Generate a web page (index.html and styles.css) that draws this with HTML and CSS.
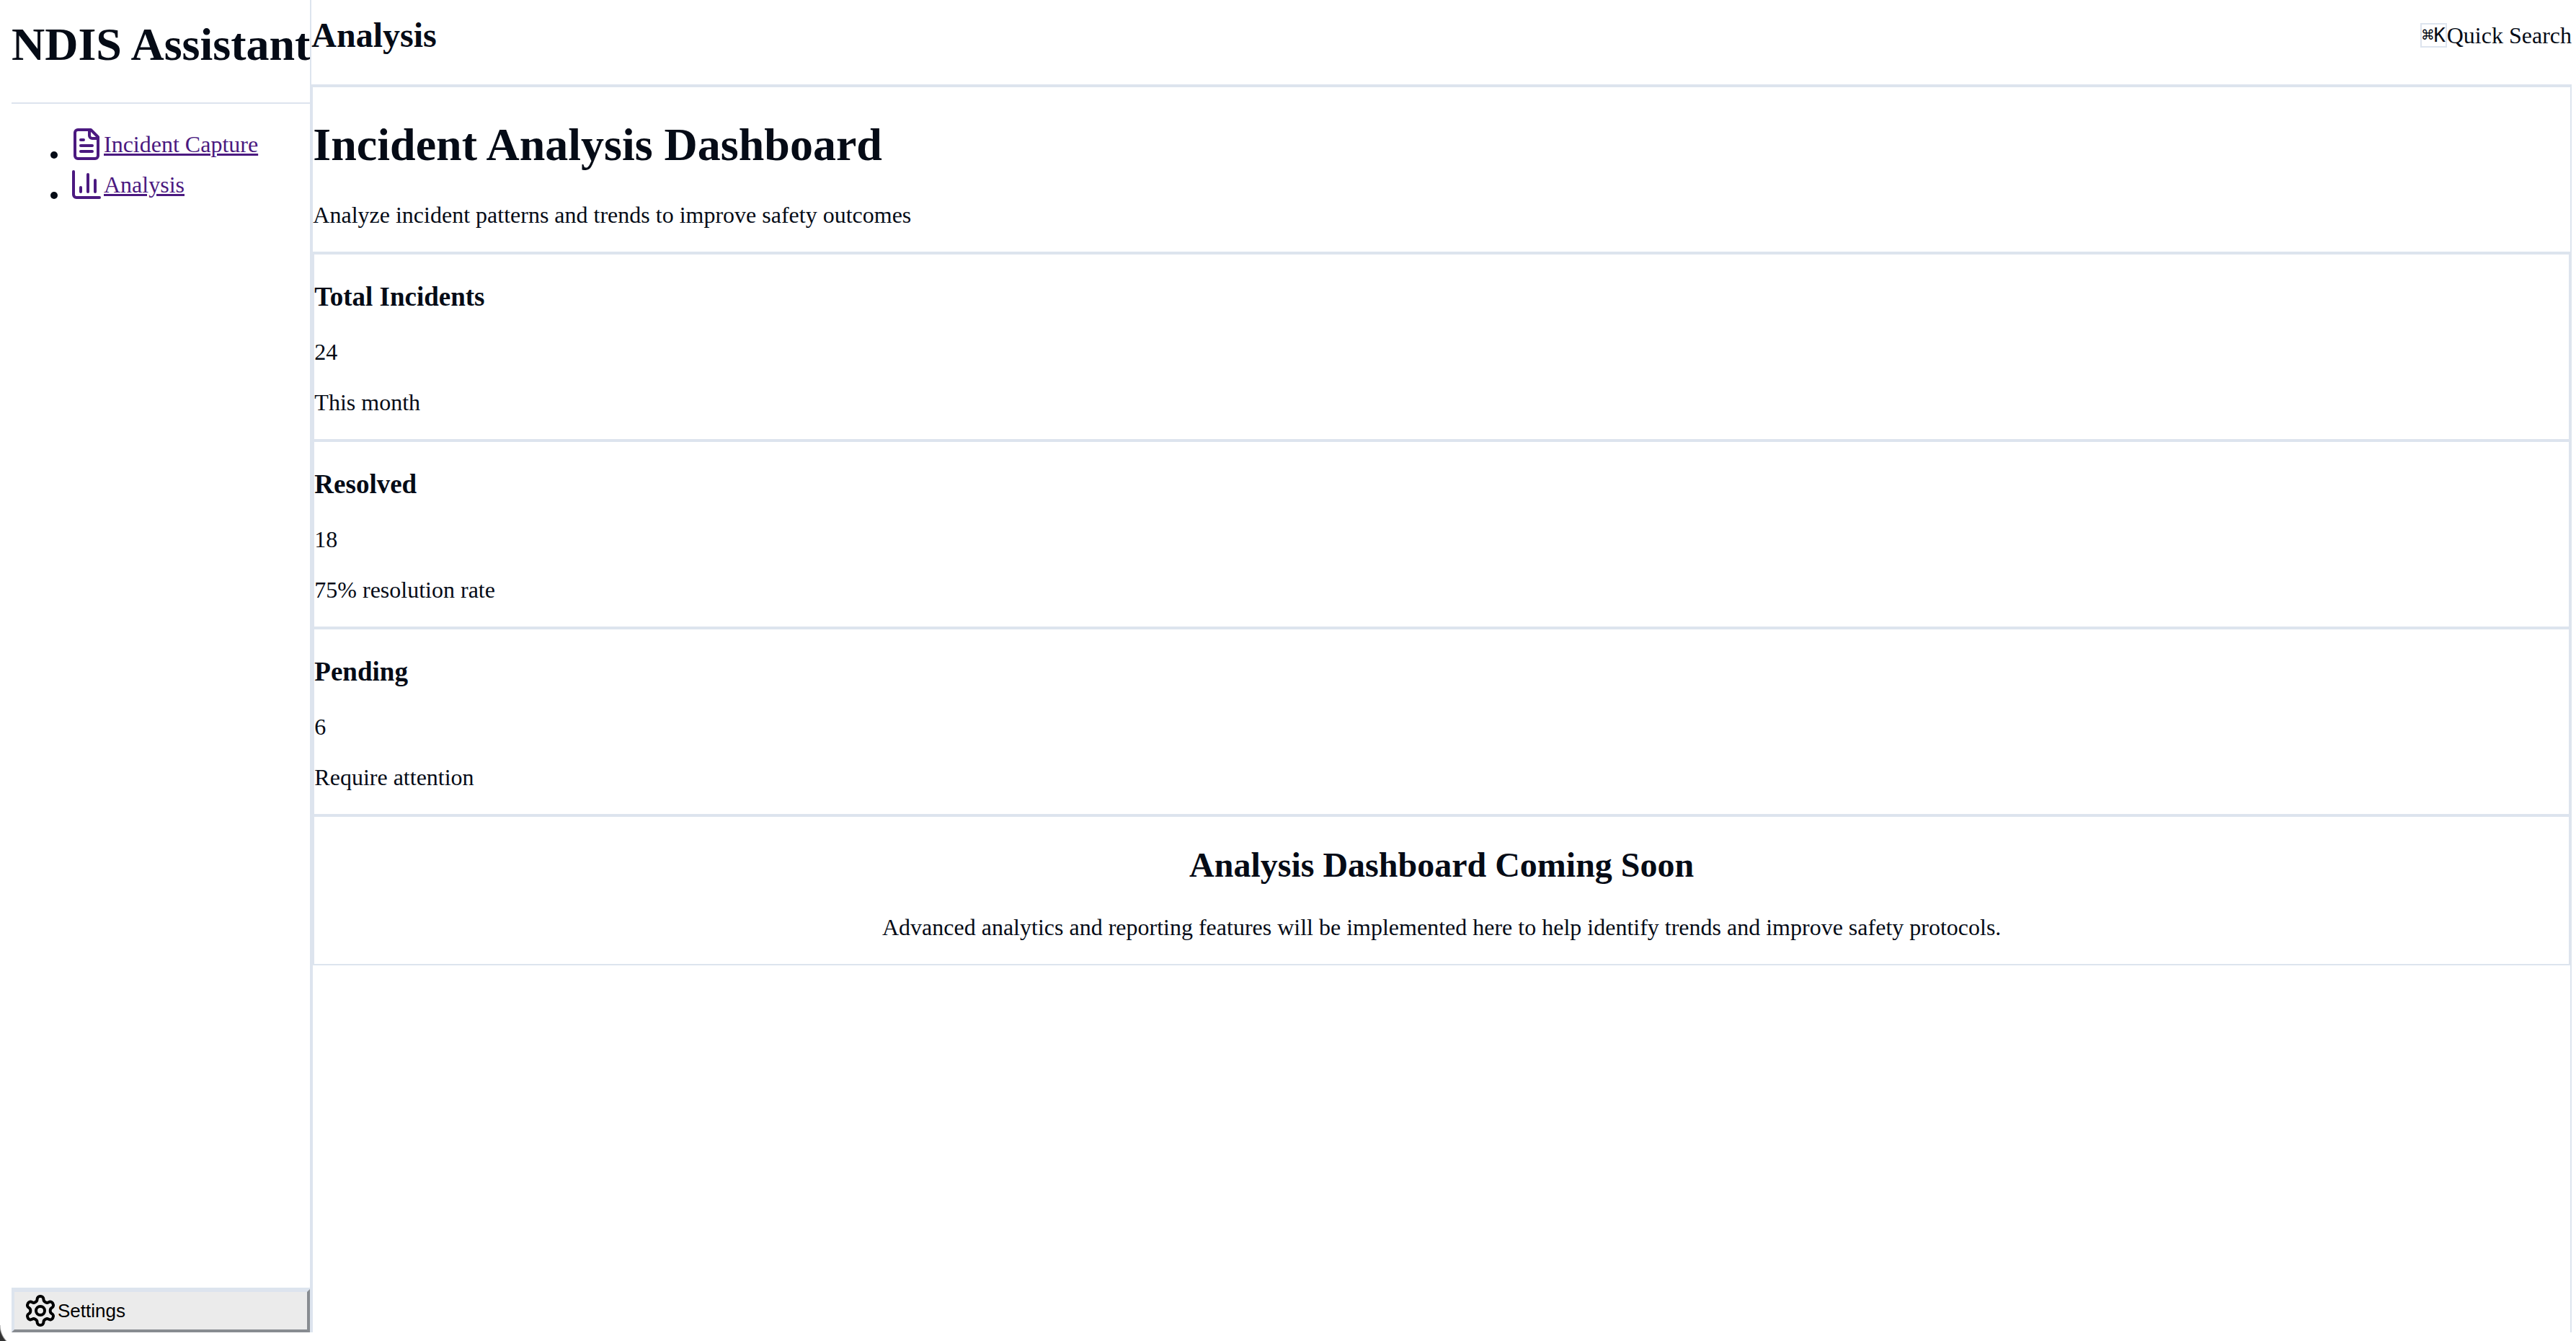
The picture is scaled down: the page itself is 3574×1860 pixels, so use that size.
FILE: index.html
```html
<!DOCTYPE html>
<html lang="en">
<head>
<meta charset="utf-8">
<title>NDIS Assistant</title>
<link rel="stylesheet" href="styles.css">
</head>
<body>
<div class="layout">
  <aside class="sidebar">
    <div class="sidebar-head"><h1 class="brand">NDIS Assistant</h1></div>
    <nav class="sidebar-nav">
      <ul class="nav-list">
        <li class="nav-item"><a class="nav-link" href="#capture"><svg class="icon" viewBox="0 0 24 24" aria-hidden="true"><path d="M15 2H6a2 2 0 0 0-2 2v16a2 2 0 0 0 2 2h12a2 2 0 0 0 2-2V7Z"/><path d="M14 2v4a2 2 0 0 0 2 2h4"/><path d="M10 9H8"/><path d="M16 13H8"/><path d="M16 17H8"/></svg><span class="nav-label">Incident Capture</span></a></li>
        <li class="nav-item"><a class="nav-link" href="#analysis"><svg class="icon" viewBox="0 0 24 24" aria-hidden="true"><path d="M3 3v16a2 2 0 0 0 2 2h16"/><path d="M18 17V9"/><path d="M13 17V5"/><path d="M8 17v-3"/></svg><span class="nav-label">Analysis</span></a></li>
      </ul>
    </nav>
    <div class="sidebar-foot">
      <button class="settings" type="button"><svg class="icon" viewBox="0 0 24 24" aria-hidden="true"><path d="M12.22 2h-.44a2 2 0 0 0-2 2v.18a2 2 0 0 1-1 1.73l-.43.25a2 2 0 0 1-2 0l-.15-.08a2 2 0 0 0-2.73.73l-.22.38a2 2 0 0 0 .73 2.73l.15.1a2 2 0 0 1 1 1.72v.51a2 2 0 0 1-1 1.74l-.15.09a2 2 0 0 0-.73 2.73l.22.38a2 2 0 0 0 2.73.73l.15-.08a2 2 0 0 1 2 0l.43.25a2 2 0 0 1 1 1.73V20a2 2 0 0 0 2 2h.44a2 2 0 0 0 2-2v-.18a2 2 0 0 1 1-1.73l.43-.25a2 2 0 0 1 2 0l.15.08a2 2 0 0 0 2.73-.73l.22-.39a2 2 0 0 0-.73-2.73l-.15-.08a2 2 0 0 1-1-1.74v-.5a2 2 0 0 1 1-1.74l.15-.09a2 2 0 0 0 .73-2.73l-.22-.38a2 2 0 0 0-2.73-.73l-.15.08a2 2 0 0 1-2 0l-.43-.25a2 2 0 0 1-1-1.73V4a2 2 0 0 0-2-2z"/><circle cx="12" cy="12" r="3"/></svg>Settings</button>
    </div>
  </aside>
  <div class="content">
    <header class="topbar">
      <h2 class="page-title">Analysis</h2>
      <div class="quick-search"><kbd class="shortcut">⌘K</kbd><span>Quick Search</span></div>
    </header>
    <main class="main">
      <section class="intro">
        <h1>Incident Analysis Dashboard</h1>
        <p>Analyze incident patterns and trends to improve safety outcomes</p>
      </section>
      <section class="card">
        <h3>Total Incidents</h3>
        <p>24</p>
        <p>This month</p>
      </section>
      <section class="card">
        <h3>Resolved</h3>
        <p>18</p>
        <p>75% resolution rate</p>
      </section>
      <section class="card">
        <h3>Pending</h3>
        <p>6</p>
        <p>Require attention</p>
      </section>
      <section class="card card-center">
        <h2>Analysis Dashboard Coming Soon</h2>
        <p>Advanced analytics and reporting features will be implemented here to help identify trends and improve safety protocols.</p>
      </section>
    </main>
  </div>
</div>
</body>
</html>
```
FILE: styles.css
```css
:root {
  --ink: #050b16;
  --line: #dde4ee;
  --visited: #4b1980;
}

* {
  box-sizing: border-box;
}

body {
  margin: 0;
  padding: 0 6px 12px 16px;
  height: 100vh;
  /* dark rounded window corner at the bottom left */
  background: radial-gradient(circle at 32px 0, #fff 31px, #333 33px) left bottom / 10px 22px no-repeat #fff;
  color: var(--ink);
  font: 32px/38px "Liberation Serif", "Times New Roman", serif;
}

h1, h2, h3 {
  font-weight: bold;
}

h1 {
  margin: 44px 0 42px;
  font-size: 64px;
  line-height: 72px;
}

h2 {
  margin: 40px 0;
  font-size: 48px;
  line-height: 54px;
}

h3 {
  margin: 38px 0 36px;
  font-size: 37px;
  line-height: 42px;
}

p {
  margin: 32px 0;
}

.icon {
  width: 48px;
  height: 48px;
  flex: none;
  fill: none;
  stroke: currentColor;
  stroke-width: 2;
  stroke-linecap: round;
  stroke-linejoin: round;
}

.layout {
  display: flex;
  height: 100%;
}

.sidebar {
  display: flex;
  flex-direction: column;
  flex: none;
  border-right: 2px solid var(--line);
}

.sidebar-head {
  padding: 26px 0 44px;
  border-bottom: 2px solid var(--line);
}

.brand {
  margin: 0;
  white-space: nowrap;
}

.sidebar-nav {
  flex: 1;
}

.nav-list {
  margin: 32px 0;
  padding-left: 80px;
}

.nav-item {
  height: 56px;
}

.nav-link {
  display: inline-flex;
  align-items: center;
  color: var(--visited);
}

.sidebar-foot {
  border-top: 2px solid var(--line);
}

.settings {
  display: flex;
  align-items: center;
  width: 100%;
  padding: 2px 12px;
  border: 4px solid;
  border-color: var(--line) #888c91 #888c91 var(--line);
  background: #ebebeb;
  color: #000;
  font: 26px/30px "Liberation Sans", Arial, sans-serif;
}

.content {
  display: flex;
  flex-direction: column;
  flex: 1;
  min-width: 0;
}

.topbar {
  display: flex;
  align-items: center;
  justify-content: space-between;
  padding: 22px 0 41px;
  border-bottom: 2px solid var(--line);
}

.page-title {
  margin: 0;
}

.quick-search {
  display: flex;
  align-items: center;
}

.shortcut {
  border: 2px solid var(--line);
  font: 27px/30px "DejaVu Sans Mono", monospace;
}

.main {
  flex: 1;
  border: 2px solid var(--line);
  border-bottom: 0;
}

.intro {
  display: flow-root;
  border-bottom: 2px solid var(--line);
}

.card {
  display: flow-root;
  border: 2px solid var(--line);
}

.card-center {
  text-align: center;
}
```
